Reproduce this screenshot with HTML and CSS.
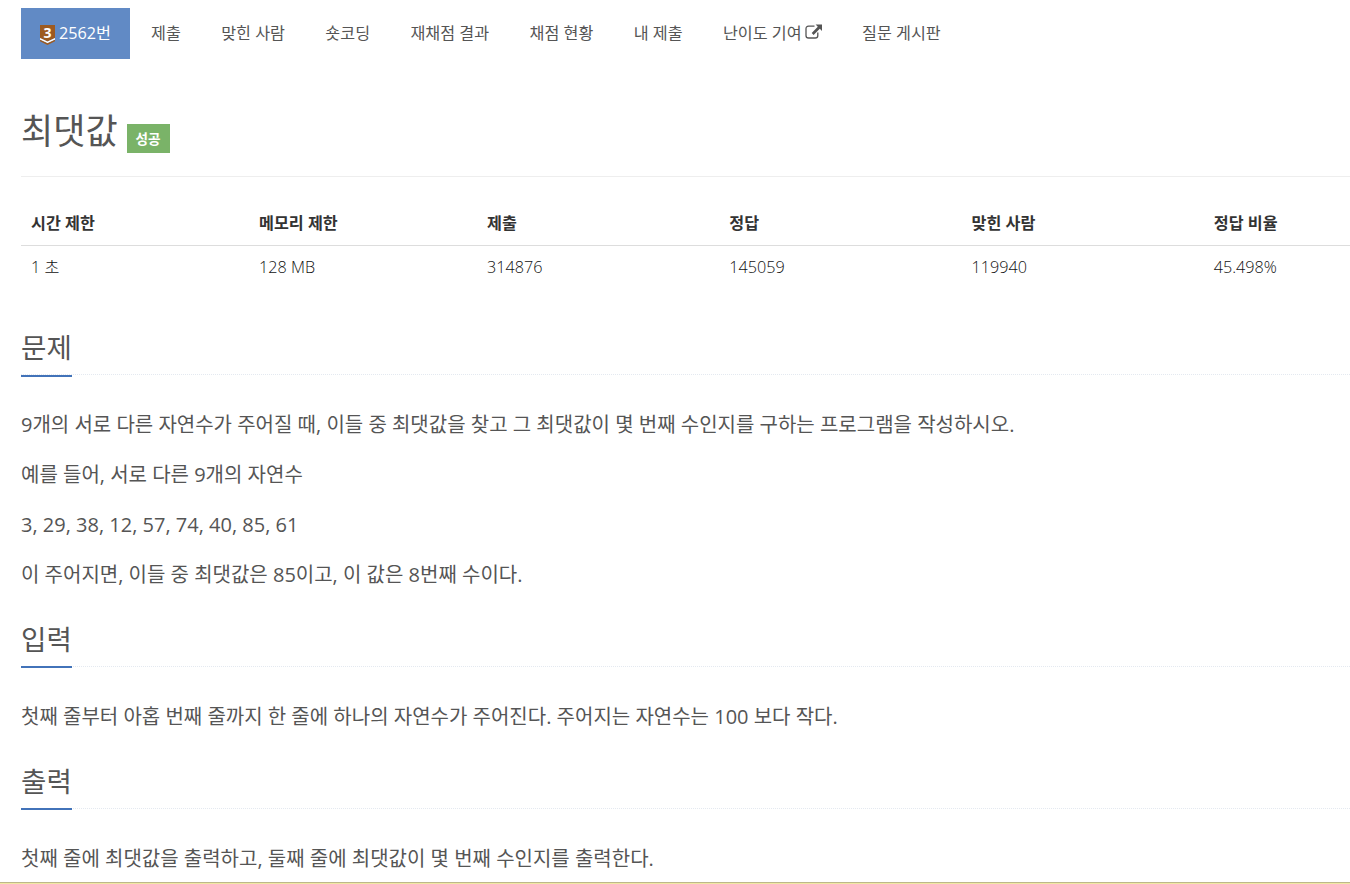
FILE: index.html
```html
<!DOCTYPE html>
<html lang="ko">
<head>
  <meta charset="utf-8">
  <title>2562번: 최댓값</title>
  <meta name="viewport" content="width=device-width, initial-scale=1.0">
  <link rel="stylesheet" href="styles.css">
</head>
<body>

  <div class="wrapper">
    <div class="container">

      <!-- Problem Menu -->
      <ul class="problem-menu">
        <li class="active"><a>
          <svg class="tier" viewBox="0 0 15 20">
            <path d="M0 0H15V13L7.5 16.5L0 13Z" fill="#9d5a20"/>
            <path d="M0 13L7.5 16.5L15 13V14.7L7.5 18.3L0 14.7Z" fill="#fff"/>
            <path d="M0 14.7L7.5 18.3L15 14.7V16.3L7.5 20L0 16.3Z" fill="#9d5a20"/>
            <text x="7.5" y="12.5" text-anchor="middle">3</text>
          </svg>2562번</a></li>
        <li><a>제출</a></li>
        <li><a>맞힌 사람</a></li>
        <li><a>숏코딩</a></li>
        <li><a>재채점 결과</a></li>
        <li><a>채점 현황</a></li>
        <li><a>내 제출</a></li>
        <li><a>난이도 기여
          <svg class="external" viewBox="0 0 17 16">
            <path d="M9.5 2.2H3.6Q1 2.2 1 4.8V11.4Q1 14 3.6 14H10.2Q12.8 14 12.8 11.4V8.6" fill="none" stroke="#555" stroke-width="1.3"/>
            <path d="M10.6 0.5H17V6.9L14.8 4.7L8.6 10.9L6.7 9L12.8 2.7Z" fill="#555"/>
          </svg></a></li>
        <li><a>질문 게시판</a></li>
      </ul>

      <!-- Title -->
      <div class="page-header">
        <h1>최댓값</h1>
        <span class="label">성공</span>
      </div>

      <table class="table">
        <thead>
          <tr>
            <th class="w16">시간 제한</th>
            <th class="w16">메모리 제한</th>
            <th class="w17">제출</th>
            <th class="w17">정답</th>
            <th class="w17">맞힌 사람</th>
            <th class="w17">정답 비율</th>
          </tr>
        </thead>
        <tbody>
          <tr>
            <td>1 초</td>
            <td>128 MB</td>
            <td>314876</td>
            <td>145059</td>
            <td>119940</td>
            <td>45.498%</td>
          </tr>
        </tbody>
      </table>

      <section>
        <div class="headline"><h2>문제</h2></div>
        <div class="problem-text">
          <p>9개의 서로 다른 자연수가 주어질 때, 이들 중 최댓값을 찾고 그 최댓값이 몇 번째 수인지를 구하는 프로그램을 작성하시오.</p>
          <p>예를 들어, 서로 다른 9개의 자연수</p>
          <p>3, 29, 38, 12, 57, 74, 40, 85, 61</p>
          <p>이 주어지면, 이들 중 최댓값은 85이고, 이 값은 8번째 수이다.</p>
        </div>
      </section>

      <section>
        <div class="headline"><h2>입력</h2></div>
        <div class="problem-text">
          <p>첫째 줄부터 아홉 번째 줄까지 한 줄에 하나의 자연수가 주어진다. 주어지는 자연수는 100 보다 작다.</p>
        </div>
      </section>

      <section>
        <div class="headline"><h2>출력</h2></div>
        <div class="problem-text">
          <p>첫째 줄에 최댓값을 출력하고, 둘째 줄에 최댓값이 몇 번째 수인지를 출력한다.</p>
        </div>
      </section>

    </div>
  </div>
  <div class="bottom-line"></div>

</body>
</html>
```
FILE: styles.css
```css
body {
  margin: 0;
  background: #fff;
  color: #333;
  font-family: 'Open Sans', 'Noto Sans CJK KR', sans-serif;
  font-size: 16.2px;
  line-height: 24px;
  overflow: hidden;
}

.wrapper {
  height: 882px;
  overflow: hidden;
}

.container {
  width: 1425px;
  padding: 8px 0 0 21px;
}

.problem-menu {
  display: flex;
  margin: 0;
  padding: 0;
  list-style: none;
}

.problem-menu li {
  margin-right: 0.4px;
}

.problem-menu .active {
  margin-right: 1px;
}

.problem-menu a {
  display: flex;
  align-items: center;
  height: 51px;
  padding: 0 20px 2px;
  box-sizing: border-box;
  color: #555;
  white-space: nowrap;
}

.problem-menu .active a {
  width: 109px;
  padding: 0 0 2px 19px;
  background: #618ac5;
  color: #fff;
}

.tier {
  width: 15px;
  height: 20px;
  margin: 4px 4px 0 0;
  overflow: visible;
}

.tier text {
  font-family: 'Open Sans', sans-serif;
  font-size: 14px;
  font-weight: bold;
  fill: #fff;
}

.external {
  width: 17px;
  height: 16px;
  margin: 0 0 1px 3px;
}

.page-header {
  display: flex;
  align-items: flex-end;
  height: 118px;
  padding-bottom: 23px;
  box-sizing: border-box;
  border-bottom: 1px solid #eee;
  margin-bottom: 24px;
}

h1 {
  margin: 0 9px 0 0;
  color: #555;
  font-size: 35px;
  font-weight: normal;
  line-height: 44px;
}

.label {
  width: 43px;
  height: 29px;
  background: #7ab368;
  color: #fff;
  font-size: 13.6px;
  font-weight: bold;
  line-height: 29px;
  text-align: center;
}

.table {
  width: 100%;
  border-collapse: collapse;
  table-layout: fixed;
}

.table th,
.table td {
  box-sizing: border-box;
  padding: 10px;
  text-align: left;
}

.table th {
  border-bottom: 1px solid #ddd;
}

.table td {
  padding-top: 9px;
  color: #111;
  font-weight: 300;
}

.w16 {
  width: 16%;
}

.w17 {
  width: 17%;
}

.table + section {
  margin-top: 37px;
}

.headline {
  display: flex;
  height: 48px;
  border-bottom: 1px dotted #e4e9f0;
  margin-bottom: 32px;
}

h2 {
  height: 48px;
  margin: 0;
  border-bottom: 2px solid #4273b9;
  color: #555;
  font-size: 27.6px;
  font-weight: normal;
  line-height: 42px;
}

.table + section h2 {
  height: 49px;
}

.problem-text {
  padding-bottom: 25px;
  color: #555;
  font-size: 20px;
  line-height: 36px;
}

.problem-text p {
  margin: 0;
}

.problem-text p + p {
  margin-top: 14px;
}

.bottom-line {
  height: 1px;
  border-top: 1px solid #bdb78a;
  background: #f0e8a4;
}
```
